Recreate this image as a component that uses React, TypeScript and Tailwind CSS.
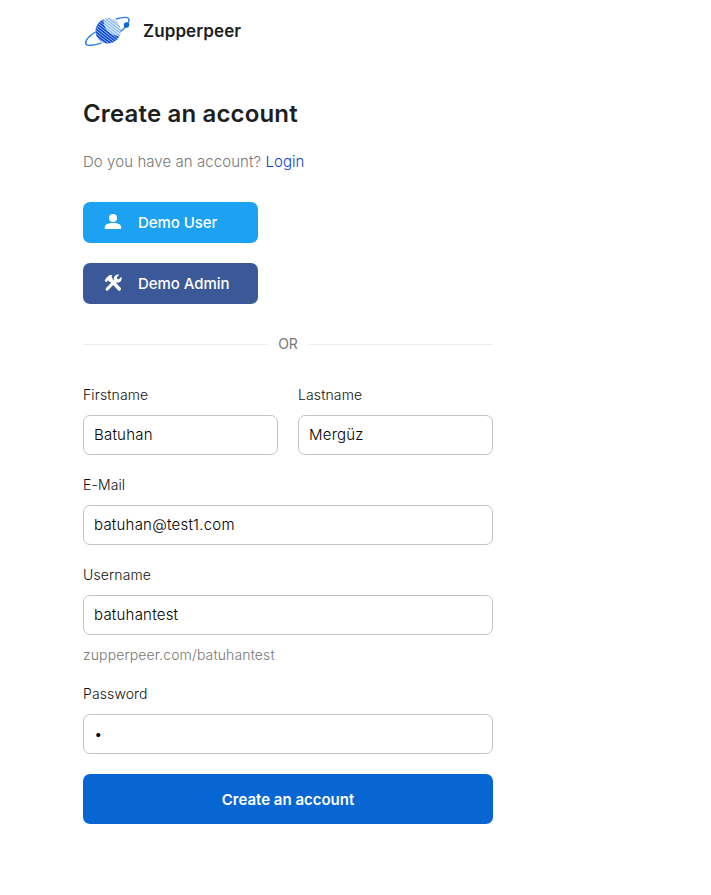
import { useState } from 'react'

function Logo() {
  return (
    <svg width="48" height="34" viewBox="0 0 48 34" fill="none">
      <defs>
        <pattern id="dark" width="2.3" height="2.3" patternUnits="userSpaceOnUse" patternTransform="rotate(38)">
          <rect width="2.3" height="2.3" fill="#9fc0f5" />
          <rect width="2.3" height="1.5" fill="#0b45cc" />
        </pattern>
        <pattern id="light" width="2.3" height="2.3" patternUnits="userSpaceOnUse" patternTransform="rotate(38)">
          <rect width="2.3" height="2.3" fill="#eef6fe" />
          <rect width="2.3" height="1.2" fill="#79b0f5" />
        </pattern>
      </defs>
      <circle cx="25" cy="16" r="12.5" fill="url(#dark)" />
      <path d="M20.500 4.300C20 12.500 26 21 36.500 21A12.500 12.500 0 0 0 20.500 4.300Z" fill="url(#light)" />
      <path d="M12.500 17C5.500 21 1.800 26 2.800 28.700C3.800 31.500 11 30.500 18.500 27.800" stroke="#2b7fe4" strokeWidth="1.400" />
      <path d="M33 4C40 1.800 45.500 1.800 46 4.300C46.500 7.500 42.500 13 37.500 16.500" stroke="#2b7fe4" strokeWidth="1.400" />
      <circle cx="43.500" cy="10" r="2.700" fill="#0866d9" />
    </svg>
  )
}

function UserIcon() {
  return (
    <svg className="mb-0.5" width="18" height="18" viewBox="0 0 18 18" fill="currentColor">
      <circle cx="9" cy="5" r="4" />
      <path d="M.8 16V14.200C.8 11.300 4.500 10 9 10S17.200 11.300 17.200 14.200V16Z" />
    </svg>
  )
}

function ToolsIcon() {
  return (
    <svg className="mb-0.5" width="18" height="18" viewBox="0 0 18 18" fill="none">
      <path d="M6.500 5.500L15.300 15" stroke="currentColor" strokeWidth="3.400" strokeLinecap="round" />
      <path d="M12 6L3.200 15" stroke="currentColor" strokeWidth="3.200" strokeLinecap="round" />
      <path d="M.8 7L1.900 4.300L5.300 1.200L8.500 .8L7.500 2.600L8.600 4.600L5.500 7.900L4 6.300L2.300 8.300Z" fill="currentColor" />
      <path d="M15.200 .7L12.900 3.200L13.200 4.900L15 5.200L17.400 2.800C18.200 5.300 17.200 7.800 14.800 8.500C13.300 8.900 11.600 8.500 10.500 7.400C9.200 5.600 9.600 2.900 11.300 1.400C12.400 .4 13.900 .2 15.200 .7Z" fill="currentColor" />
    </svg>
  )
}

type FieldProps = {
  label: string
  value: string
  type?: string
  onChange: (value: string) => void
}

function Field({ label, value, type = 'text', onChange }: FieldProps) {
  return (
    <label className="block min-w-0 flex-1">
      <span className="block h-5 text-sm leading-5 font-light tracking-[0.12px] text-[#111]">{label}</span>
      <input
        className="mt-2.5 block h-10 w-full rounded-[7px] border border-[#c4c4c4] bg-white px-2.5 pb-0.5 text-[15px] font-light tracking-[0.22px] text-black outline-none"
        type={type}
        value={value}
        onChange={(e) => onChange(e.target.value)}
      />
    </label>
  )
}

export default function App() {
  const [firstname, setFirstname] = useState('Batuhan')
  const [lastname, setLastname] = useState('Mergüz')
  const [email, setEmail] = useState('batuhan@test1.com')
  const [username, setUsername] = useState('batuhantest')
  const [password, setPassword] = useState('1')

  return (
    <div className="min-h-screen bg-white pt-[15px] pl-[83px] font-['Inter',sans-serif]">
      <div className="w-[410px]">
        <div className="flex h-[34px] items-center gap-3">
          <Logo />
          <span className="text-[17px] font-semibold tracking-[0.1px] text-[#1c1f1e]">Zupperpeer</span>
        </div>

        <h1 className="mt-[49px] text-2xl leading-8 font-semibold tracking-[0.16px] text-[#1c1f1e]">Create an account</h1>
        <p className="mt-[22px] text-[15px] leading-5 font-light tracking-[0.07px] text-[#777]">
          Do you have an account? <a href="#" className="text-[#0b3fd0]">Login</a>
        </p>

        <div className="mt-[30px] flex flex-col gap-5 text-[15px] font-medium text-white">
          <button className="flex h-[41px] w-[175px] items-center rounded-[7px] bg-[#1da1f2] pl-[21px]">
            <UserIcon />
            <span className="ml-4 pt-px tracking-[-0.05px]">Demo User</span>
          </button>
          <button className="flex h-[41px] w-[175px] items-center rounded-[7px] bg-[#3b5998] pl-[21px]">
            <ToolsIcon />
            <span className="ml-4 pt-px tracking-[-0.05px]">Demo Admin</span>
          </button>
        </div>

        <div className="mt-[30px] flex h-5 items-center gap-2.5">
          <div className="h-px flex-1 bg-[#ececec]" />
          <span className="text-sm text-[#777]">OR</span>
          <div className="h-px flex-1 bg-[#ececec]" />
        </div>

        <form className="mt-[31px]" onSubmit={(e) => e.preventDefault()}>
          <div className="flex gap-5">
            <Field label="Firstname" value={firstname} onChange={setFirstname} />
            <Field label="Lastname" value={lastname} onChange={setLastname} />
          </div>
          <div className="mt-5">
            <Field label="E-Mail" value={email} onChange={setEmail} />
          </div>
          <div className="mt-5">
            <Field label="Username" value={username} onChange={setUsername} />
            <p className="mt-2.5 text-sm leading-5 font-light tracking-[0.13px] text-[#777]">zupperpeer.com/{username}</p>
          </div>
          <div className="mt-[19px]">
            <Field label="Password" type="password" value={password} onChange={setPassword} />
          </div>
          <button className="mt-5 h-[50px] w-full rounded-[7px] bg-[#0866d3] pt-0.5 text-[15px] font-semibold text-white">
            Create an account
          </button>
        </form>
      </div>
    </div>
  )
}
